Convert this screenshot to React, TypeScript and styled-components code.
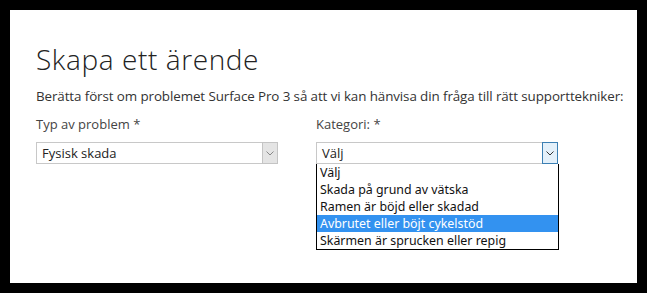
import React from "react";
import styled, { createGlobalStyle } from "styled-components";

const Global = createGlobalStyle`
  html, body { margin: 0; padding: 0; background: #000; }
  body { width: 647px; height: 293px; overflow: hidden; }
`;

const Frame = styled.div`
  width: 647px;
  height: 293px;
  box-sizing: border-box;
  padding: 10px;
  background: #000;
`;

const Panel = styled.div`
  background: #fff;
  width: 627px;
  height: 273px;
  box-sizing: border-box;
  padding: 31px 0 0 26px;
  font-family: "Open Sans", "Noto Sans", sans-serif;
  color: #333;
`;

const Title = styled.h1`
  margin: 0;
  font-weight: 300;
  font-size: 28px;
  line-height: 36px;
  color: #222;
  letter-spacing: 0.6px;
`;

const Lead = styled.p`
  margin: 10px 0 0 0;
  font-size: 13.4px;
  line-height: 18px;
  color: #333;
  letter-spacing: -0.1px;
`;

const Fields = styled.div`
  display: flex;
  gap: 38px;
  margin-top: 10px;
`;

const Field = styled.div`
  display: flex;
  flex-direction: column;
  width: 242px;
`;

const Label = styled.label`
  font-size: 13px;
  line-height: 18px;
  color: #444;
  margin-bottom: 9px;
`;

const SelectWrap = styled.div`
  position: relative;
`;

const SelectBox = styled.div`
  display: flex;
  height: 22px;
  box-sizing: border-box;
  border: 1px solid #c8c8c8;
  background: #fff;
  align-items: stretch;
`;

const SelectValue = styled.span`
  flex: 1;
  padding-left: 5px;
  font-size: 13px;
  line-height: 20px;
  color: #222;
`;

const Arrow = styled.span<{ $active?: boolean }>`
  width: 16px;
  box-sizing: border-box;
  display: flex;
  align-items: center;
  justify-content: center;
  background: ${(p) => (p.$active ? "#e3f0fa" : "#e4e4e4")};
  border: 1px solid ${(p) => (p.$active ? "#3b7fb3" : "#c4c4c4")};
  margin: -1px -1px -1px 0;
  height: 22px;
`;

const List = styled.ul`
  position: absolute;
  top: 22px;
  left: 0;
  width: 243px;
  box-sizing: border-box;
  margin: 0;
  padding: 0;
  list-style: none;
  border: 1px solid #000;
  border-top: none;
  background: #fff;
  font-family: "Noto Sans", "Open Sans", sans-serif;
`;

const Item = styled.li<{ $selected?: boolean }>`
  height: 17px;
  line-height: 17px;
  padding-left: 3px;
  font-size: 12.4px;
  color: ${(p) => (p.$selected ? "#fff" : "#111")};
  background: ${(p) => (p.$selected ? "#3392f0" : "transparent")};
  white-space: nowrap;
`;

const Chevron = ({ color }: { color: string }) => (
  <svg width="8" height="5" viewBox="0 0 8 5">
    <path d="M0.5 0.5 L4 4 L7.5 0.5" fill="none" stroke={color} strokeWidth="1" />
  </svg>
);

const options = [
  "Välj",
  "Skada på grund av vätska",
  "Ramen är böjd eller skadad",
  "Avbrutet eller böjt cykelstöd",
  "Skärmen är sprucken eller repig",
];

export default function App() {
  return (
    <>
      <Global />
      <Frame>
        <Panel>
          <Title>Skapa ett ärende</Title>
          <Lead>
            Berätta först om problemet Surface Pro 3 så att vi kan hänvisa din fråga till rätt supporttekniker:
          </Lead>
          <Fields>
            <Field>
              <Label>Typ av problem *</Label>
              <SelectWrap>
                <SelectBox>
                  <SelectValue>Fysisk skada</SelectValue>
                  <Arrow>
                    <Chevron color="#888" />
                  </Arrow>
                </SelectBox>
              </SelectWrap>
            </Field>
            <Field>
              <Label>Kategori: *</Label>
              <SelectWrap>
                <SelectBox>
                  <SelectValue>Välj</SelectValue>
                  <Arrow $active>
                    <Chevron color="#333" />
                  </Arrow>
                </SelectBox>
                <List>
                  {options.map((o, i) => (
                    <Item key={o} $selected={i === 3}>
                      {o}
                    </Item>
                  ))}
                </List>
              </SelectWrap>
            </Field>
          </Fields>
        </Panel>
      </Frame>
    </>
  );
}
